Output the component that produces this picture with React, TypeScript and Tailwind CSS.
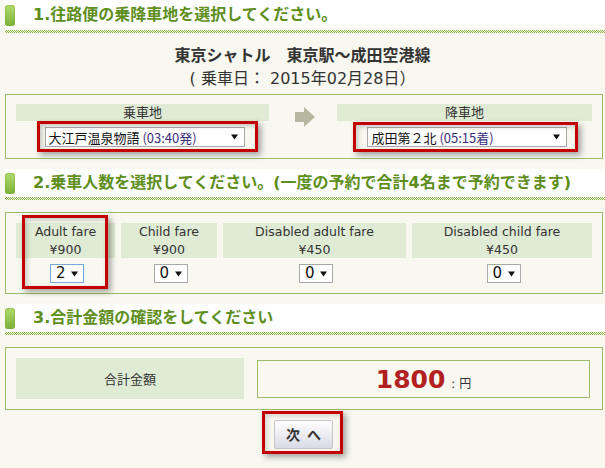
import React from 'react';

const dots =
  'h-[3px] bg-[image:repeating-conic-gradient(#86b43f_0%_25%,#f4f8ea_0%_50%)] bg-[length:2px_2px]';

function SectionHeader({ children, band }: { children: React.ReactNode; band: string }) {
  return (
    <div className="ml-[5px]">
      <div className={`flex items-center bg-white ${band}`}>
        <div className="w-[10px] h-[21px] rounded-[3px] bg-gradient-to-b from-[#b2dc6c] to-[#7db03a] shadow-[inset_0_0_0_1px_rgba(120,170,50,0.4)]" />
        <h2 className="ml-[18px] text-[16px] font-bold text-[#5e8e1c] leading-none whitespace-nowrap">
          {children}
        </h2>
      </div>
      <div className={dots} />
    </div>
  );
}

function Caret() {
  return (
    <svg width="7" height="6" viewBox="0 0 7 6" className="shrink-0">
      <path d="M0 0.5h7L3.5 5.5z" fill="#111" />
    </svg>
  );
}

// red annotation frame drawn over a control
function Mark({ className }: { className: string }) {
  return (
    <span
      className={`pointer-events-none absolute border-[3px] border-[#c30000] shadow-[3px_3px_6px_rgba(0,0,0,0.35),inset_2px_2px_5px_rgba(0,0,0,0.2)] ${className}`}
    />
  );
}

function FareColumn({ title, price, value, focus }: { title: string; price: string; value: string; focus?: boolean }) {
  return (
    <div className="relative flex flex-col items-center">
      <div className="w-full h-[35px] bg-[#dfebd4] flex flex-col items-center justify-center leading-[18px] text-[12.5px] text-[#333]">
        <span>{title}</span>
        <span>{price}</span>
      </div>
      <div
        className={`mt-[6px] ml-[3px] w-[34px] h-[19px] bg-white flex items-center justify-between pl-[5px] pr-[5px] border ${
          focus ? 'border-[#7aa6dc]' : 'border-[#a9a9a9]'
        }`}
      >
        <span className="text-[15px] leading-none text-[#111]">{value}</span>
        <Caret />
      </div>
      {focus && <Mark className="left-[6px] right-[7px] -top-[8px] -bottom-[6px]" />}
    </div>
  );
}

export default function App() {
  return (
    <div className="w-[605px] h-[468px] overflow-hidden bg-[#f8f8f1] text-[#333] font-['DejaVu_Sans','Noto_Sans_CJK_JP',sans-serif]">
      <SectionHeader band="h-[30px]">1.往路便の乗降車地を選択してください。</SectionHeader>

      {/* Route */}
      <div className="pt-[12px] text-center text-[16px]">
        <div className="font-bold leading-[22px]">東京シャトル　東京駅〜成田空港線</div>
        <div className="leading-[24px]">( 乗車日： 2015年02月28日）</div>
      </div>

      <div className="mt-[3px] ml-[5px] w-[598px] border border-[#9dbb6b] px-[10px] pt-[9px] pb-[11px] grid grid-cols-[253px_68px_255px]">
        <div className="flex flex-col items-center">
          <div className="w-full h-[17px] bg-[#dfebd4] text-[13px] leading-[17px] text-center">乗車地</div>
          <div className="relative mt-[6px] ml-[4px]">
            <div className="w-[200px] h-[20px] bg-white border border-[#a9a9a9] flex items-center justify-between pl-[3px] pr-[6px] font-['Noto_Sans_CJK_JP',sans-serif] text-[13px] leading-none text-[#111]">
              <span>
                大江戸温泉物語 <span className="text-[#3b2d7a]">(03:40発)</span>
              </span>
              <Caret />
            </div>
            <Mark className="-left-[8px] -right-[13px] -top-[6px] -bottom-[5px]" />
          </div>
        </div>

        <div className="flex justify-center pt-[3px] pl-[4px]">
          <svg width="20" height="20" viewBox="0 0 20 20">
            <polygon points="0,5 9,5 9,0 20,10 9,20 9,15 0,15" fill="#b7b7a0" />
          </svg>
        </div>

        <div className="flex flex-col items-center">
          <div className="w-full h-[17px] bg-[#dfebd4] text-[13px] leading-[17px] text-center">降車地</div>
          <div className="relative mt-[6px] ml-[4px]">
            <div className="w-[200px] h-[20px] bg-white border border-[#a9a9a9] flex items-center justify-between pl-[4px] pr-[6px] font-['Noto_Sans_CJK_JP',sans-serif] text-[13px] leading-none text-[#111]">
              <span>
                成田第２北 <span className="text-[#3b2d7a]">(05:15着)</span>
              </span>
              <Caret />
            </div>
            <Mark className="-left-[14px] -right-[11px] -top-[5px] -bottom-[5px]" />
          </div>
        </div>
      </div>

      <div className="mt-[10px]">
        <SectionHeader band="h-[28px]">2.乗車人数を選択してください。(一度の予約で合計4名まで予約できます)</SectionHeader>
      </div>

      <div className="mt-[12px] ml-[5px] w-[598px] border border-[#9dbb6b] px-[10px] pt-[10px] pb-[10px] grid grid-cols-[99px_96px_183px_180px] gap-[6px]">
        <FareColumn title="Adult fare" price="¥900" value="2" focus />
        <FareColumn title="Child fare" price="¥900" value="0" />
        <FareColumn title="Disabled adult fare" price="¥450" value="0" />
        <FareColumn title="Disabled child fare" price="¥450" value="0" />
      </div>

      <div className="mt-[10px]">
        <SectionHeader band="h-[28px]">3.合計金額の確認をしてください</SectionHeader>
      </div>

      <div className="mt-[12px] ml-[5px] w-[598px] border border-[#9dbb6b] pl-[10px] pr-[12px] pt-[10px] pb-[10px] grid grid-cols-[228px_333px] gap-[13px] items-center">
        <div className="h-[41px] bg-[#dfebd4] flex items-center justify-center text-[13px] font-['Noto_Sans_CJK_JP',sans-serif]">
          合計金額
        </div>
        <div className="h-[38px] border border-[#9dbb6b] flex items-baseline justify-center pt-[4px]">
          <span className="text-[25px] font-bold text-[#b2201f] leading-[30px]">1800</span>
          <span className="ml-[6px] text-[12px] text-[#333]">: 円</span>
        </div>
      </div>

      <div className="mt-[1px] flex justify-center">
        <div className="border-[3px] border-[#c30000] pt-[6px] pb-[2px] pl-[9px] pr-[7px] shadow-[3px_3px_6px_rgba(0,0,0,0.35),inset_2px_2px_5px_rgba(0,0,0,0.15)]">
          <button className="w-[59px] h-[29px] rounded-[2px] border border-[#c6c6c6] bg-gradient-to-b from-[#ffffff] to-[#dadae6] flex items-center justify-center gap-[7px] text-[14px] font-bold text-[#333] font-['Noto_Sans_CJK_JP',sans-serif]">
            <span>次</span>
            <span>へ</span>
          </button>
        </div>
      </div>
    </div>
  );
}
